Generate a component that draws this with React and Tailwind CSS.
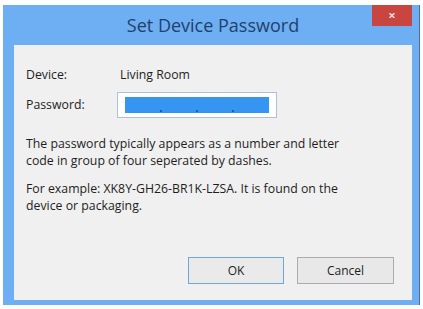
import React from "react";

const App = () => {
  return (
    <div className="w-[423px] h-[309px] bg-white pt-[5px] pl-[3px]" style={{ fontFamily: '"Open Sans", "Noto Sans", sans-serif' }}>
      <div className="w-[417px] h-[300px] bg-[#6eaef2] flex flex-col pl-[11px] pr-[7px] pb-[5px] border-r border-[#4a6f9c]">
        <div className="h-[40px] relative flex items-center justify-center">
          <span className="text-[18px] text-[#1f416b]">Set Device Password</span>
          <button className="absolute right-0 top-0 w-[40px] h-[21px] bg-[#c8463f] flex items-center justify-center text-[#f6dede] text-[13px] font-bold leading-none">
            ×
          </button>
        </div>
        <div className="flex-1 bg-[#f0f0f0] text-[#1e1e1e] text-[12.3px] px-[12px] pt-[21px] flex flex-col">
          <div className="flex items-center h-[18px]">
            <span className="w-[94px]">Device:</span>
            <span>Living Room</span>
          </div>
          <div className="flex items-center mt-[8px]">
            <span className="w-[91px]">Password:</span>
            <div className="w-[160px] h-[26px] bg-white border border-[#abc1d8] flex items-center px-[7px]">
              <div className="h-[16px] w-full bg-[#3595f0] flex items-end justify-center gap-[34px] pb-[1px]">
                <span className="w-[2px] h-[2px] bg-[#1d5ea8]" />
                <span className="w-[2px] h-[2px] bg-[#1d5ea8]" />
                <span className="w-[2px] h-[2px] bg-[#1d5ea8]" />
              </div>
            </div>
          </div>
          <p className="mt-[17px] leading-[17px]">
            The password typically appears as a number and letter
            <br />
            code in group of four seperated by dashes.
          </p>
          <p className="mt-[11px] leading-[17px]">
            For example: XK8Y-GH26-BR1K-LZSA. It is found on the
            <br />
            device or packaging.
          </p>
          <div className="flex justify-end gap-[13px] mt-auto mb-[16px] pr-[6px]">
            <button className="w-[96px] h-[27px] border border-[#6fa6dc] bg-[#eaeaea] text-[12px] text-[#1e1e1e]">
              OK
            </button>
            <button className="w-[97px] h-[27px] border border-[#acacac] bg-[#e8e8e8] text-[12px] text-[#1e1e1e]">
              Cancel
            </button>
          </div>
        </div>
      </div>
    </div>
  );
};

export default App;
